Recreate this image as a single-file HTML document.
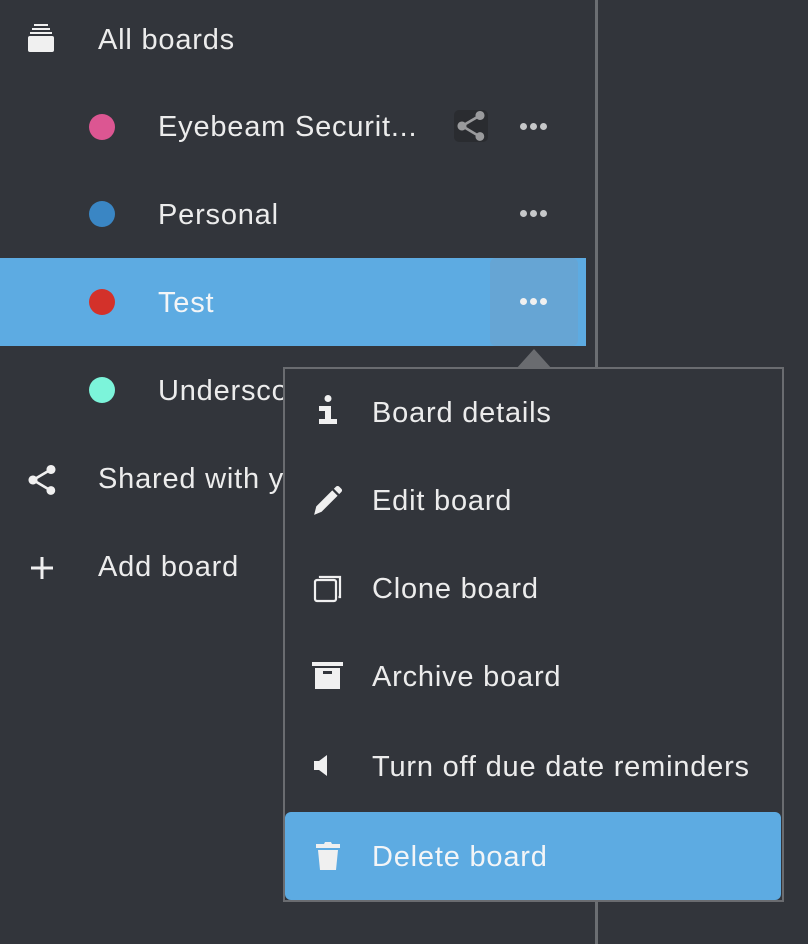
<!DOCTYPE html>
<html><head><meta charset="utf-8"><style>
*{margin:0;padding:0;box-sizing:border-box}
body{width:808px;height:944px;background:#32353b;font-family:"Liberation Sans",sans-serif;color:#ececec;position:relative;overflow:hidden;font-size:29px;letter-spacing:0.8px}
.t{position:absolute;line-height:30px;white-space:nowrap}
.dot{position:absolute;width:26px;height:26px;border-radius:50%}
.dots{position:absolute;width:28px;height:8px}
.dots i{position:absolute;top:0;width:7px;height:7px;border-radius:50%;background:#c6c7c9}
.ic{position:absolute}
</style></head><body>
<div style="position:absolute;left:595px;top:0;width:3px;height:944px;background:#6b6e72"></div>
<svg class="ic" style="left:24px;top:22px" width="32" height="32" viewBox="0 0 32 32"><rect x="10" y="2" width="14" height="2" fill="#f0f0f0"/><rect x="8" y="6" width="18" height="2" fill="#f0f0f0"/><rect x="6" y="10" width="22" height="2" fill="#f0f0f0"/><rect x="4" y="14" width="26" height="16" rx="2" fill="#f0f0f0"/></svg>
<div class="t" style="left:98px;top:25px">All boards</div>

<div class="dot" style="left:89px;top:114px;background:#dc5692"></div>
<div class="t" style="left:158px;top:112px">Eyebeam Securit...</div>
<div style="position:absolute;left:454px;top:110px;width:34px;height:32px;border-radius:5px;background:#2a2c30"></div>
<svg class="ic" style="left:453px;top:108px" width="36" height="36" viewBox="0 0 24 24"><path fill="#9a9b9d" d="M18 16.1c-.8 0-1.4.3-2 .8l-7.1-4.2c.1-.2.1-.5.1-.7s0-.5-.1-.7L16 7.2c.5.5 1.2.8 2 .8 1.7 0 3-1.3 3-3s-1.3-3-3-3-3 1.3-3 3c0 .2 0 .5.1.7L8 9.8C7.5 9.3 6.8 9 6 9c-1.7 0-3 1.3-3 3s1.3 3 3 3c.8 0 1.5-.3 2-.8l7.1 4.2c-.1.2-.1.4-.1.6 0 1.6 1.3 2.9 2.9 2.9s2.9-1.3 2.9-2.9-1.2-2.9-2.8-2.9z"/></svg>
<div class="dots" style="left:520px;top:123px"><i style="left:0"></i><i style="left:10px"></i><i style="left:20px"></i></div>

<div class="dot" style="left:89px;top:201px;background:#3a86c4"></div>
<div class="t" style="left:158px;top:200px">Personal</div>
<div class="dots" style="left:520px;top:210px"><i style="left:0"></i><i style="left:10px"></i><i style="left:20px"></i></div>

<div style="position:absolute;left:0;top:258px;width:586px;height:88px;background:#5dabe2"></div>
<div style="position:absolute;left:490px;top:258px;width:88px;height:88px;border-radius:6px;background:#66a5d4"></div>
<div class="dot" style="left:89px;top:289px;background:#d3312a"></div>
<div class="t" style="left:158px;top:288px;color:#f3f5f7">Test</div>
<div class="dots" style="left:520px;top:298px"><i style="left:0;background:#f0f0f0"></i><i style="left:10px;background:#f0f0f0"></i><i style="left:20px;background:#f0f0f0"></i></div>

<div class="dot" style="left:89px;top:377px;background:#7cf4da"></div>
<div class="t" style="left:158px;top:376px">Underscore</div>

<svg class="ic" style="left:24px;top:462px" width="36" height="36" viewBox="0 0 24 24"><path fill="#f0f0f0" d="M18 16.1c-.8 0-1.4.3-2 .8l-7.1-4.2c.1-.2.1-.5.1-.7s0-.5-.1-.7L16 7.2c.5.5 1.2.8 2 .8 1.7 0 3-1.3 3-3s-1.3-3-3-3-3 1.3-3 3c0 .2 0 .5.1.7L8 9.8C7.5 9.3 6.8 9 6 9c-1.7 0-3 1.3-3 3s1.3 3 3 3c.8 0 1.5-.3 2-.8l7.1 4.2c-.1.2-.1.4-.1.6 0 1.6 1.3 2.9 2.9 2.9s2.9-1.3 2.9-2.9-1.2-2.9-2.8-2.9z"/></svg>
<div class="t" style="left:98px;top:464px">Shared with you</div>
<svg class="ic" style="left:28px;top:554px" width="28" height="28" viewBox="0 0 28 28"><rect x="12.5" y="3" width="3" height="22" fill="#f0f0f0"/><rect x="3" y="12.5" width="22" height="3" fill="#f0f0f0"/></svg>
<div class="t" style="left:98px;top:552px">Add board</div>

<div style="position:absolute;left:283px;top:367px;width:501px;height:535px;background:#32353b;border:2px solid #6a6c70"></div>
<svg class="ic" style="left:516px;top:347px" width="36" height="22"><path d="M0 22 L18 2 L36 22Z" fill="#6a6c70"/></svg>
<div style="position:absolute;left:285px;top:812px;width:496px;height:88px;border-radius:6px;background:#5dabe2"></div>

<svg class="ic" style="left:314px;top:394px" width="28" height="34" viewBox="0 0 28 34"><circle cx="14" cy="4.5" r="3.5" fill="#f0f0f0"/><path d="M5 12h12v13h6v5H5v-5h6v-8H5z" fill="#f0f0f0"/></svg>
<div class="t" style="left:372px;top:398px">Board details</div>
<svg class="ic" style="left:312px;top:484px" width="32" height="32" viewBox="0 0 30 30"><path d="M2 29l2-8L19 6l5 5L9 26z M20.5 4.5l2-2a2 2 0 0 1 3 0l2 2a2 2 0 0 1 0 3l-2 2z" fill="#f0f0f0"/></svg>
<div class="t" style="left:372px;top:486px">Edit board</div>
<svg class="ic" style="left:313px;top:574px" width="30" height="30" viewBox="0 0 30 30"><rect x="2" y="6" width="21" height="21" rx="2" fill="none" stroke="#f0f0f0" stroke-width="2.2"/><path d="M7 4V3h20v20h-1.5" fill="none" stroke="#f0f0f0" stroke-width="2.2"/></svg>
<div class="t" style="left:372px;top:574px">Clone board</div>
<svg class="ic" style="left:312px;top:662px" width="32" height="32" viewBox="0 0 32 32"><rect x="0" y="0" width="31" height="4" fill="#f0f0f0"/><path d="M3 6h25v21H3z" fill="#f0f0f0"/><rect x="11" y="9" width="9" height="3" fill="#32353b"/></svg>
<div class="t" style="left:372px;top:662px">Archive board</div>
<svg class="ic" style="left:313px;top:754px" width="20" height="26" viewBox="0 0 20 26"><path d="M1 7h5l8-6v21l-8-6H1z" fill="#f0f0f0"/></svg>
<div class="t" style="left:372px;top:752px">Turn off due date reminders</div>
<svg class="ic" style="left:314px;top:841px" width="28" height="30" viewBox="0 0 28 30"><path d="M2 3h8l1-2h6l1 2h8v4H2z" fill="#f0f0f0"/><path d="M4 9h20l-2 20H6z" fill="#f0f0f0"/></svg>
<div class="t" style="left:372px;top:842px;color:#f3f5f7">Delete board</div>
</body></html>
